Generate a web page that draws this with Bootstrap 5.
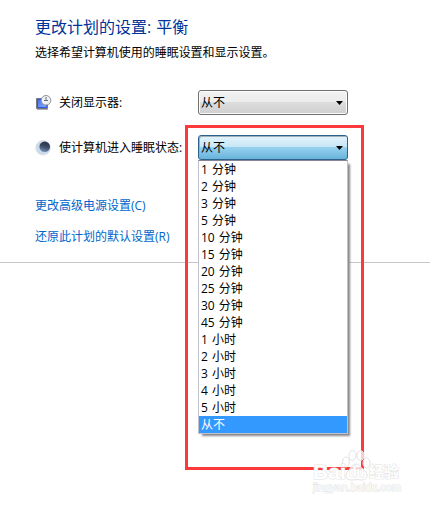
<!DOCTYPE html>
<html lang="zh-CN">
<head>
<meta charset="utf-8">
<meta name="viewport" content="width=device-width, initial-scale=1">
<title>更改计划的设置</title>
<link rel="stylesheet" href="https://cdn.jsdelivr.net/npm/bootstrap@5.3.0/dist/css/bootstrap.min.css">
<style>
body{font:12px/17px "Open Sans","Noto Sans CJK SC",sans-serif;color:#000;background:#fff;height:505px;overflow:hidden}
.plan-panel{height:263px;padding:16px 0 0 35px;border-bottom:1px solid #c8c8c8}
.plan-title{font-size:16px;line-height:22px;color:#039;margin:0;font-weight:400;word-spacing:1px}
.plan-intro{margin:6px 0 0;letter-spacing:-.03px}
.settings{margin-top:29px;gap:20px}
.setting{height:25px}
.setting-icon{width:17px;height:16px;margin-right:7px;flex:none}
.setting-label{width:139px;white-space:nowrap}
.combo{width:150px;height:25px;padding:0 4px 0 2px;border:1px solid #707070;border-radius:3px;background:linear-gradient(#f2f2f2 0,#ebebeb 50%,#ddd 50%,#cfcfcf 100%);box-shadow:inset 0 0 0 1px #fcfcfc;font-size:12px;line-height:17px;color:#000}
.combo-open{border-color:#2c628b;background:linear-gradient(#e5f4fc 0,#c4e5f6 50%,#98d1ef 50%,#68b3db 100%);box-shadow:inset 1px 1px 0 #9eb0ba}
.combo svg{width:7px;height:4px}
.options{top:25px;left:0;width:150px;height:274px;background:#fff;border:1px solid #c0c0cc;border-top-color:#85859a;box-shadow:3px 3px 2px -1px #888;z-index:2;word-spacing:.9px}
.option{height:17px;line-height:17px;padding-left:2px;white-space:nowrap}
.option.chosen{background:#39f;color:#fff}
.plan-links{margin-top:37px;gap:14px}
.plan-links a{color:#06c}
.callout{left:185px;top:125px;width:179px;height:345px;border:3px solid #fc3a3c;z-index:3;pointer-events:none}
.watermark{left:310px;top:449px;width:95px;height:48px;z-index:4}
</style>
</head>
<body class="position-relative">
<main class="plan-panel">
  <h1 class="plan-title">更改计划的设置: 平衡</h1>
  <p class="plan-intro">选择希望计算机使用的睡眠设置和显示设置。</p>
  <div class="settings d-flex flex-column">
    <div class="setting d-flex align-items-center">
      <svg class="setting-icon" viewBox="0 0 17 16">
        <defs><linearGradient id="scr" x2="1" y2="1"><stop stop-color="#4068e4"/><stop offset="1" stop-color="#8cb4ff"/></linearGradient></defs>
        <path d="M1.500 3.500h11v10H1.500z" fill="url(#scr)" stroke="#77777f"/>
        <path d="M2.500 4.500h9v8h-9z" fill="none" stroke="#3155dc"/>
        <path d="M2 14.500h11" stroke="#aaa"/>
        <circle cx="11" cy="5.300" r="4.800" fill="#eef1f3" stroke="#8e9298"/>
        <path d="M11 2v3.500M9 5.500h4" fill="none" stroke="#65707c"/>
      </svg>
      <span class="setting-label">关闭显示器:</span>
      <button type="button" class="combo d-flex align-items-center justify-content-between"><span>从不</span><svg viewBox="0 0 7 4"><path d="M0 0h7L3.500 4z"/></svg></button>
    </div>
    <div class="setting d-flex align-items-center">
      <svg class="setting-icon" viewBox="0 0 17 16">
        <defs><linearGradient id="moon" x1=".7" y1="0" x2=".4" y2="1"><stop stop-color="#27303f"/><stop offset=".5" stop-color="#3b4a66"/><stop offset="1" stop-color="#7590b4"/></linearGradient></defs>
        <circle cx="8" cy="7.800" r="7.300" fill="#c9dbea" stroke="#dfe3e6"/>
        <circle cx="9.700" cy="6.700" r="5.300" fill="url(#moon)"/>
      </svg>
      <span class="setting-label">使计算机进入睡眠状态:</span>
      <div class="position-relative">
        <button type="button" class="combo combo-open d-flex align-items-center justify-content-between"><span>从不</span><svg viewBox="0 0 7 4"><path d="M0 0h7L3.500 4z"/></svg></button>
        <div class="options position-absolute">
          <div class="option">1 分钟</div>
          <div class="option">2 分钟</div>
          <div class="option">3 分钟</div>
          <div class="option">5 分钟</div>
          <div class="option">10 分钟</div>
          <div class="option">15 分钟</div>
          <div class="option">20 分钟</div>
          <div class="option">25 分钟</div>
          <div class="option">30 分钟</div>
          <div class="option">45 分钟</div>
          <div class="option">1 小时</div>
          <div class="option">2 小时</div>
          <div class="option">3 小时</div>
          <div class="option">4 小时</div>
          <div class="option">5 小时</div>
          <div class="option chosen">从不</div>
        </div>
      </div>
    </div>
  </div>
  <div class="plan-links d-flex flex-column align-items-start">
    <a href="#" class="text-decoration-none">更改高级电源设置(C)</a>
    <a href="#" class="text-decoration-none">还原此计划的默认设置(R)</a>
  </div>
</main>
<div class="callout position-absolute"></div>
<svg class="watermark position-absolute" viewBox="0 0 95 48">
  <g fill="#fff" fill-opacity=".75" stroke="#e2e2e2">
    <ellipse cx="36" cy="13" rx="3.500" ry="5"/>
    <ellipse cx="42.500" cy="6.500" rx="3.500" ry="5"/>
    <ellipse cx="50.500" cy="6.500" rx="3.500" ry="5"/>
    <ellipse cx="56.500" cy="14" rx="3.500" ry="5"/>
    <path d="M46 15c-4 0-5 4-8 7-4 4-2 9 3 9 3 0 7-1 10 0 6 1 8-5 4-9-4-3-5-7-9-7z"/>
    <g font-family="Liberation Sans,sans-serif" font-weight="700" stroke-width="1" paint-order="stroke" fill-opacity="1">
      <text x="3" y="30" font-size="20" textLength="33" lengthAdjust="spacingAndGlyphs">Bai</text>
      <text x="39" y="28" font-size="14" textLength="15" lengthAdjust="spacingAndGlyphs">du</text>
      <text x="59" y="28" font-size="15" font-family="Noto Sans CJK SC,sans-serif" textLength="30">经验</text>
      <text x="3" y="41.500" font-size="10" font-weight="400" textLength="88" lengthAdjust="spacingAndGlyphs" stroke-width=".9">jingyan.baidu.com</text>
    </g>
  </g>
</svg>
<script src="https://cdn.jsdelivr.net/npm/bootstrap@5.3.0/dist/js/bootstrap.bundle.min.js"></script>
</body>
</html>
